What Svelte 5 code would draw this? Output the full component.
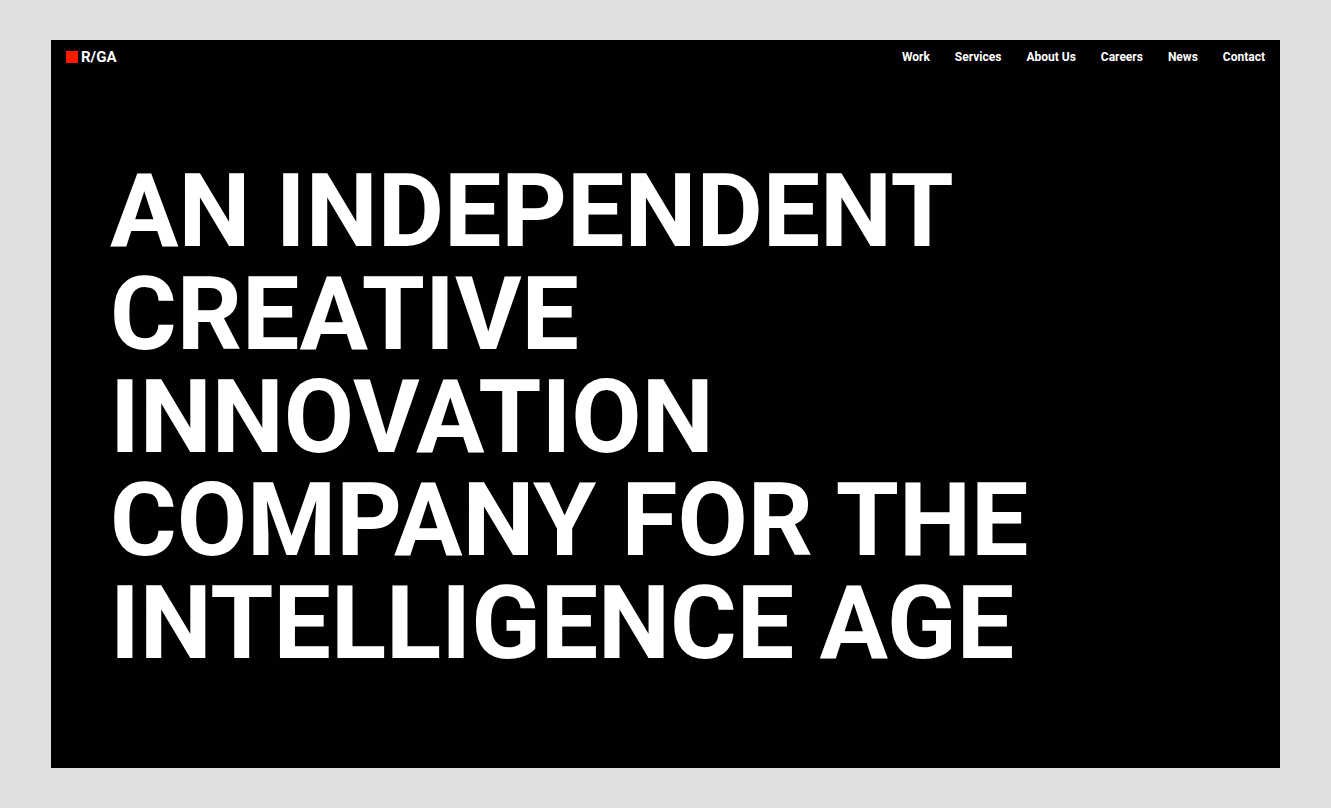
<!--
  Landing page hero: brand and main navigation over a large statement
-->

<script lang="ts">
  const links = ['Work', 'Services', 'About Us', 'Careers', 'News', 'Contact'];

  const lines = [
    'An independent',
    'creative',
    'innovation',
    'company for the',
    'intelligence age'
  ];
</script>

<div class="page">
  <div class="screen">
    <header class="header">
      <a class="brand" href="/">
        <span class="brand-mark"></span>
        <span>R/GA</span>
      </a>

      <nav class="nav" aria-label="Main">
        {#each links as link}
          <a href="#{link.toLowerCase().replace(' ', '-')}">{link}</a>
        {/each}
      </nav>
    </header>

    <main class="hero">
      <h1>
        {#each lines as line}
          <span class="line">{line}</span>
        {/each}
      </h1>
    </main>
  </div>
</div>

<style>
  :global(body) {
    background: #e0dee1;
  }

  .page {
    box-sizing: border-box;
    display: flex;
    min-height: 100vh;
    padding: 40px 51px;
    font-family: Roboto, 'Liberation Sans', Arial, sans-serif;
    color: #fff;
  }

  .screen {
    flex: 1;
    display: flex;
    flex-direction: column;
    background: #010002;
  }

  /* Header */
  .header {
    display: flex;
    align-items: center;
    justify-content: space-between;
    padding: 8px 15px;
    line-height: 18px;
  }

  .brand {
    display: flex;
    align-items: center;
    gap: 3px;
    font-size: 15px;
    font-weight: 700;
    color: inherit;
    text-decoration: none;
  }

  .brand-mark {
    width: 12px;
    height: 12px;
    background: #ff1a00;
  }

  .nav {
    display: flex;
    gap: 25px;
    font-size: 12px;
    font-weight: 700;
  }

  .nav a {
    color: inherit;
    text-decoration: none;
  }

  /* Statement */
  .hero {
    padding: 86px 59px;
  }

  h1 {
    margin: 0;
    font-size: 102px;
    font-weight: 700;
    line-height: 103px;
    text-transform: uppercase;
    white-space: nowrap;
  }

  .line {
    display: block;
  }
</style>
